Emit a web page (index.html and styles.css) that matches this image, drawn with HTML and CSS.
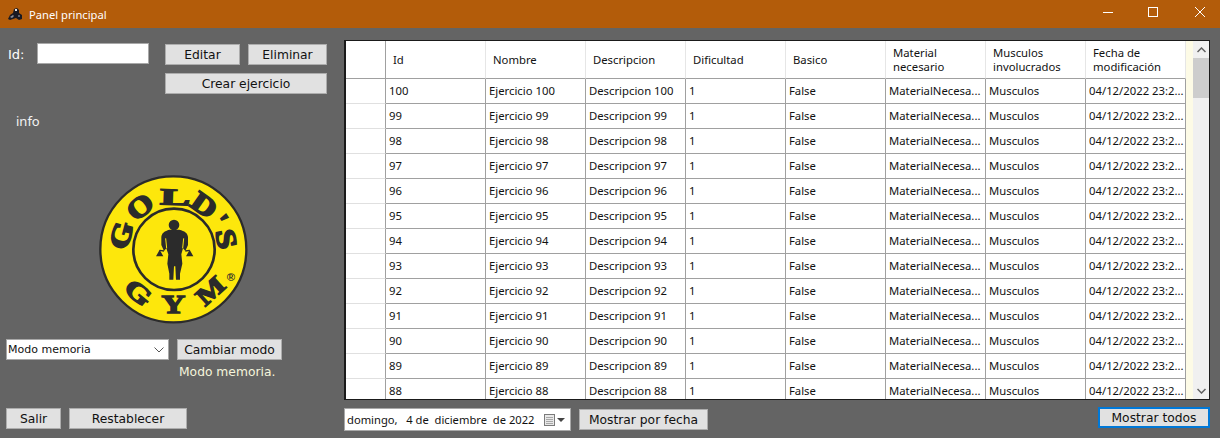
FILE: index.html
```html
<!DOCTYPE html>
<html lang="es">
<head>
    <meta charset="UTF-8">
    <title>Panel principal</title>
    <link rel="stylesheet" href="styles.css">
</head>
<body>
    <!-- Title bar -->
    <header class="titlebar">
        <svg class="app-icon" width="16" height="16" viewBox="0 0 16 16">
            <path d="M1 13 L3 9 L6 7 L7 3 L10 2 L12 4 L12 7 L15 9 L15 13 L12 14 L9 12 L6 13 L3 14 Z" fill="#1a1a22"/>
            <path d="M3 11 L6 9 L7 10 L5 12 Z" fill="#8d8f9a"/>
            <path d="M8 3 L10 3 L10 5 L8 5 Z" fill="#e6e6e6"/>
            <path d="M11 9 L13 9 L13 11 L11 11 Z" fill="#5f6270"/>
        </svg>
        <span class="title">Panel principal</span>
        <div class="window-controls">
            <svg class="ctl" width="46" height="28" viewBox="0 0 46 28"><path d="M18 12.5 H28" stroke="#fff" fill="none"/></svg>
            <svg class="ctl" width="46" height="28" viewBox="0 0 46 28"><rect x="17.5" y="7.5" width="9" height="9" stroke="#fff" fill="none"/></svg>
            <svg class="ctl" width="46" height="28" viewBox="0 0 46 28"><path d="M18 7 L28 17 M28 7 L18 17" stroke="#fff" fill="none"/></svg>
        </div>
    </header>

    <main class="main">
        <!-- Left panel -->
        <aside class="side">
            <div class="id-row">
                <label class="id-label" for="id">Id:</label>
                <input class="id-input" id="id" type="text">
                <div class="actions">
                    <button class="btn btn-edit">Editar</button>
                    <button class="btn btn-del">Eliminar</button>
                    <button class="btn btn-new">Crear ejercicio</button>
                </div>
            </div>
            <p class="info">info</p>

            <svg class="logo" width="170" height="165" viewBox="0 0 510 495">
                <circle cx="250" cy="247" r="219" fill="#fde70c" stroke="#2b2b2b" stroke-width="7"/>
                <circle cx="252" cy="247" r="122" fill="#fde70c" stroke="#2b2b2b" stroke-width="8"/>
                <!-- letters around the ring -->
                <text class="logo-text" transform="rotate(-75 250 247) translate(250 113) scale(1.25 1)">G</text>
                <text class="logo-text" transform="rotate(-38 250 247) translate(250 113) scale(1.2 1)">O</text>
                <text class="logo-text" transform="rotate(2 250 247) translate(250 113) scale(1.6 0.82)">L</text>
                <text class="logo-text" transform="rotate(35 250 247) translate(250 113) scale(1.25 1)">D</text>
                <text class="logo-text" transform="rotate(58 250 247) translate(250 113)">'</text>
                <text class="logo-text" transform="rotate(79 250 247) translate(250 113) scale(1.25 1)">S</text>
                <text class="logo-text logo-text-low" transform="rotate(39 250 247) translate(250 439) scale(1.4 1)">G</text>
                <text class="logo-text logo-text-low" transform="rotate(0 250 247) translate(250 439) scale(1.3 1)">Y</text>
                <text class="logo-text logo-text-low" transform="rotate(-42 250 247) translate(250 439) scale(1.25 1)">M</text>
                <text class="logo-reg" x="423" y="341">®</text>
                <!-- bodybuilder -->
                <circle cx="252" cy="174" r="16" fill="#2b2b2b"/>
                <path d="M238 188 C224 192 215 198 214 210 L214 234 L222 252 L229 244 L235 262 L232 290 L238 320 L238 338 L250 338 L252 298 L256 298 L258 338 L270 338 L270 320 L277 290 L274 262 L279 244 L286 252 L294 234 L294 210 C293 198 284 192 268 188 Z" fill="#2b2b2b"/>
                <path d="M227 214 L230 244 M281 214 L278 244" stroke="#fde70c" stroke-width="3" fill="none"/>
                <path d="M198 268 L209 248 L220 268 Z M288 268 L299 248 L310 268 Z" fill="#2b2b2b"/>
                <path d="M222 252 L209 250 M286 252 L299 250" stroke="#2b2b2b" stroke-width="4" fill="none"/>
            </svg>

            <div class="mode-row">
                <div class="combo">
                    <span>Modo memoria</span>
                    <svg width="10" height="6" viewBox="0 0 10 6"><path d="M0.5 0.5 L5 5 L9.5 0.5" stroke="#555" fill="none"/></svg>
                </div>
                <button class="btn btn-mode">Cambiar modo</button>
            </div>
            <p class="mode-status">Modo memoria.</p>

            <div class="bottom-row">
                <button class="btn btn-exit">Salir</button>
                <button class="btn btn-reset">Restablecer</button>
            </div>
        </aside>

        <!-- Exercises grid -->
        <section class="content">
            <div class="grid-box">
                <div class="grid-scroll">
                    <table class="grid">
                        <thead>
                            <tr>
                                <th class="rowhead"></th>
                                <th>Id</th>
                                <th>Nombre</th>
                                <th>Descripcion</th>
                                <th>Dificultad</th>
                                <th>Basico</th>
                                <th>Material necesario</th>
                                <th>Musculos involucrados</th>
                                <th>Fecha de modificación</th>
                            </tr>
                        </thead>
                        <tbody>
                            <tr><td class="rowhead"></td><td>100</td><td>Ejercicio 100</td><td>Descripcion 100</td><td>1</td><td>False</td><td>MaterialNecesa...</td><td>Musculos</td><td>04/12/2022 23:2...</td></tr>
                            <tr><td class="rowhead"></td><td>99</td><td>Ejercicio 99</td><td>Descripcion 99</td><td>1</td><td>False</td><td>MaterialNecesa...</td><td>Musculos</td><td>04/12/2022 23:2...</td></tr>
                            <tr><td class="rowhead"></td><td>98</td><td>Ejercicio 98</td><td>Descripcion 98</td><td>1</td><td>False</td><td>MaterialNecesa...</td><td>Musculos</td><td>04/12/2022 23:2...</td></tr>
                            <tr><td class="rowhead"></td><td>97</td><td>Ejercicio 97</td><td>Descripcion 97</td><td>1</td><td>False</td><td>MaterialNecesa...</td><td>Musculos</td><td>04/12/2022 23:2...</td></tr>
                            <tr><td class="rowhead"></td><td>96</td><td>Ejercicio 96</td><td>Descripcion 96</td><td>1</td><td>False</td><td>MaterialNecesa...</td><td>Musculos</td><td>04/12/2022 23:2...</td></tr>
                            <tr><td class="rowhead"></td><td>95</td><td>Ejercicio 95</td><td>Descripcion 95</td><td>1</td><td>False</td><td>MaterialNecesa...</td><td>Musculos</td><td>04/12/2022 23:2...</td></tr>
                            <tr><td class="rowhead"></td><td>94</td><td>Ejercicio 94</td><td>Descripcion 94</td><td>1</td><td>False</td><td>MaterialNecesa...</td><td>Musculos</td><td>04/12/2022 23:2...</td></tr>
                            <tr><td class="rowhead"></td><td>93</td><td>Ejercicio 93</td><td>Descripcion 93</td><td>1</td><td>False</td><td>MaterialNecesa...</td><td>Musculos</td><td>04/12/2022 23:2...</td></tr>
                            <tr><td class="rowhead"></td><td>92</td><td>Ejercicio 92</td><td>Descripcion 92</td><td>1</td><td>False</td><td>MaterialNecesa...</td><td>Musculos</td><td>04/12/2022 23:2...</td></tr>
                            <tr><td class="rowhead"></td><td>91</td><td>Ejercicio 91</td><td>Descripcion 91</td><td>1</td><td>False</td><td>MaterialNecesa...</td><td>Musculos</td><td>04/12/2022 23:2...</td></tr>
                            <tr><td class="rowhead"></td><td>90</td><td>Ejercicio 90</td><td>Descripcion 90</td><td>1</td><td>False</td><td>MaterialNecesa...</td><td>Musculos</td><td>04/12/2022 23:2...</td></tr>
                            <tr><td class="rowhead"></td><td>89</td><td>Ejercicio 89</td><td>Descripcion 89</td><td>1</td><td>False</td><td>MaterialNecesa...</td><td>Musculos</td><td>04/12/2022 23:2...</td></tr>
                            <tr><td class="rowhead"></td><td>88</td><td>Ejercicio 88</td><td>Descripcion 88</td><td>1</td><td>False</td><td>MaterialNecesa...</td><td>Musculos</td><td>04/12/2022 23:2...</td></tr>
                        </tbody>
                    </table>
                </div>
                <div class="strip"></div>
                <div class="scrollbar">
                    <div class="arrow">
                        <svg width="9" height="6" viewBox="0 0 9 6"><path d="M0.5 5 L4.5 1 L8.5 5" stroke="#606060" stroke-width="1.5" fill="none"/></svg>
                    </div>
                    <div class="thumb"></div>
                    <div class="track"></div>
                    <div class="arrow">
                        <svg width="9" height="6" viewBox="0 0 9 6"><path d="M0.5 1 L4.5 5 L8.5 1" stroke="#606060" stroke-width="1.5" fill="none"/></svg>
                    </div>
                </div>
            </div>

            <div class="filter-row">
                <div class="datepicker">
                    <span class="date-text">domingo,&nbsp;&nbsp; 4 de&nbsp; diciembre&nbsp; de 2022</span>
                    <svg width="22" height="12" viewBox="0 0 22 12">
                        <rect x="0.5" y="0.5" width="10" height="11" fill="#e8e8e8" stroke="#7a7a7a"/>
                        <path d="M2 3.5 H9 M2 5.5 H9 M2 7.5 H9 M2 9.5 H9" stroke="#a8a8a8"/>
                        <path d="M13 4 H21 L17 8 Z" fill="#444"/>
                    </svg>
                </div>
                <button class="btn btn-date">Mostrar por fecha</button>
                <button class="btn btn-all">Mostrar todos</button>
            </div>
        </section>
    </main>
</body>
</html>
```

FILE: styles.css
```css
/* Window */
html, body {
    margin: 0;
    height: 438px;
    overflow: hidden;
}

body {
    background-color: #646464;
    font-family: "DejaVu Sans", sans-serif;
}

p {
    margin: 0;
}

.titlebar {
    display: flex;
    align-items: center;
    height: 28px;
    padding-left: 7px;
    background-color: #b35c0a;
    color: #fff;
}

.app-icon {
    margin-right: 6px;
}

.title {
    font-family: "Noto Sans", sans-serif;
    font-size: 11.2px;
}

.window-controls {
    display: flex;
    margin-left: auto;
    margin-right: -3px;
}

.ctl {
    display: block;
}

.main {
    display: flex;
}

/* Buttons */
.btn {
    height: 21px;
    padding: 0;
    background-color: #e1e1e1;
    border: 1px solid #adadad;
    color: #111;
    font-family: "DejaVu Sans", sans-serif;
    font-size: 12.3px;
}

/* Left panel */
.side {
    width: 344px;
    flex: none;
    display: flex;
    flex-direction: column;
}

.id-row {
    display: flex;
    align-items: flex-start;
    margin-top: 16px;
    padding-left: 8px;
}

.id-label {
    width: 29px;
    margin-top: 3px;
    color: #fff;
    font-size: 13px;
}

.id-input {
    box-sizing: border-box;
    width: 112px;
    height: 21px;
    margin-top: -1px;
    border: 1px solid #a8a8a8;
    background-color: #fff;
}

.actions {
    display: grid;
    grid-template-columns: 75px 79px;
    gap: 8px;
    margin-left: 16px;
}

.btn-new {
    grid-column: 1 / 3;
}

.info {
    margin: 18px 0 0 16px;
    color: #f2f2f2;
    font-family: "Noto Sans", sans-serif;
    font-size: 13px;
}

.logo {
    display: block;
    margin: 37px 0 0 90px;
}

.logo-text {
    font-family: "Liberation Serif", serif;
    font-size: 84px;
    font-weight: bold;
    fill: #2b2b2b;
    stroke: #2b2b2b;
    stroke-width: 5px;
    text-anchor: middle;
}

.logo-text-low {
    font-size: 76px;
    stroke-width: 4px;
}

.logo-reg {
    font-family: "Liberation Sans", sans-serif;
    font-size: 34px;
    font-weight: bold;
    fill: #2b2b2b;
    text-anchor: middle;
}

.mode-row {
    display: flex;
    gap: 8px;
    margin: 7px 0 0 6px;
}

.combo {
    box-sizing: border-box;
    width: 163px;
    height: 21px;
    display: flex;
    align-items: center;
    justify-content: space-between;
    padding: 0 4px 0 1px;
    background-color: #fff;
    border: 1px solid #a8a8a8;
    color: #111;
    font-size: 11px;
}

.btn-mode {
    width: 105px;
}

.mode-status {
    margin: 5px 0 0 179px;
    color: #f5f5dc;
    font-size: 12.3px;
}

.bottom-row {
    display: flex;
    gap: 8px;
    margin: 29px 0 0 6px;
}

.btn-exit {
    width: 55px;
}

.btn-reset {
    width: 118px;
}

/* Exercises grid */
.content {
    flex: 1;
    min-width: 0;
    padding: 12px 10px 0 0;
}

.grid-box {
    box-sizing: border-box;
    display: flex;
    height: 360px;
    border: 1px solid #1a1a1a;
    border-left-width: 2px;
    background-color: #fff;
}

.grid-scroll {
    width: 840px;
    overflow: hidden;
}

.grid {
    width: 840px;
    table-layout: fixed;
    border-collapse: separate;
    border-spacing: 0;
    font-family: "Noto Sans", sans-serif;
    font-size: 11.3px;
    color: #111;
}

.grid th {
    box-sizing: border-box;
    width: 100px;
    height: 38px;
    padding: 0 6px 0 7px;
    background-color: #fff;
    border-right: 1px solid #e6e6e6;
    border-bottom: 1px solid #a0a0a0;
    font-weight: normal;
    text-align: left;
    line-height: 14px;
}

.grid td {
    box-sizing: border-box;
    height: 25px;
    padding: 0 3px 2px;
    background-color: #fff;
    border-right: 1px solid #a0a0a0;
    border-bottom: 1px solid #a0a0a0;
    white-space: nowrap;
    overflow: hidden;
}

.grid .rowhead {
    width: 40px;
    padding: 0;
    border-right-color: #a0a0a0;
}

.grid td.rowhead {
    border-bottom-color: #e0e0e0;
}

.strip {
    width: 7px;
    background-color: #fdfbe6;
}

.scrollbar {
    flex: 1;
    display: flex;
    flex-direction: column;
    background-color: #f0f0f0;
}

.arrow {
    height: 17px;
    display: flex;
    align-items: center;
    justify-content: center;
}

.thumb {
    height: 40px;
    background-color: #cdcdcd;
}

.track {
    flex: 1;
}

.filter-row {
    display: flex;
    align-items: flex-start;
    margin-top: 8px;
}

.datepicker {
    box-sizing: border-box;
    width: 227px;
    height: 23px;
    display: flex;
    align-items: center;
    justify-content: space-between;
    padding: 0 4px 0 2px;
    background-color: #fff;
    border: 1px solid #a8a8a8;
    color: #111;
    font-family: "Noto Sans", sans-serif;
    font-size: 11.2px;
    white-space: nowrap;
}

.btn-date {
    width: 129px;
    margin: 1px 0 0 8px;
}

.btn-all {
    box-sizing: border-box;
    width: 112px;
    margin: -1px 0 0 auto;
    border: 2px solid #0078d7;
}
```
